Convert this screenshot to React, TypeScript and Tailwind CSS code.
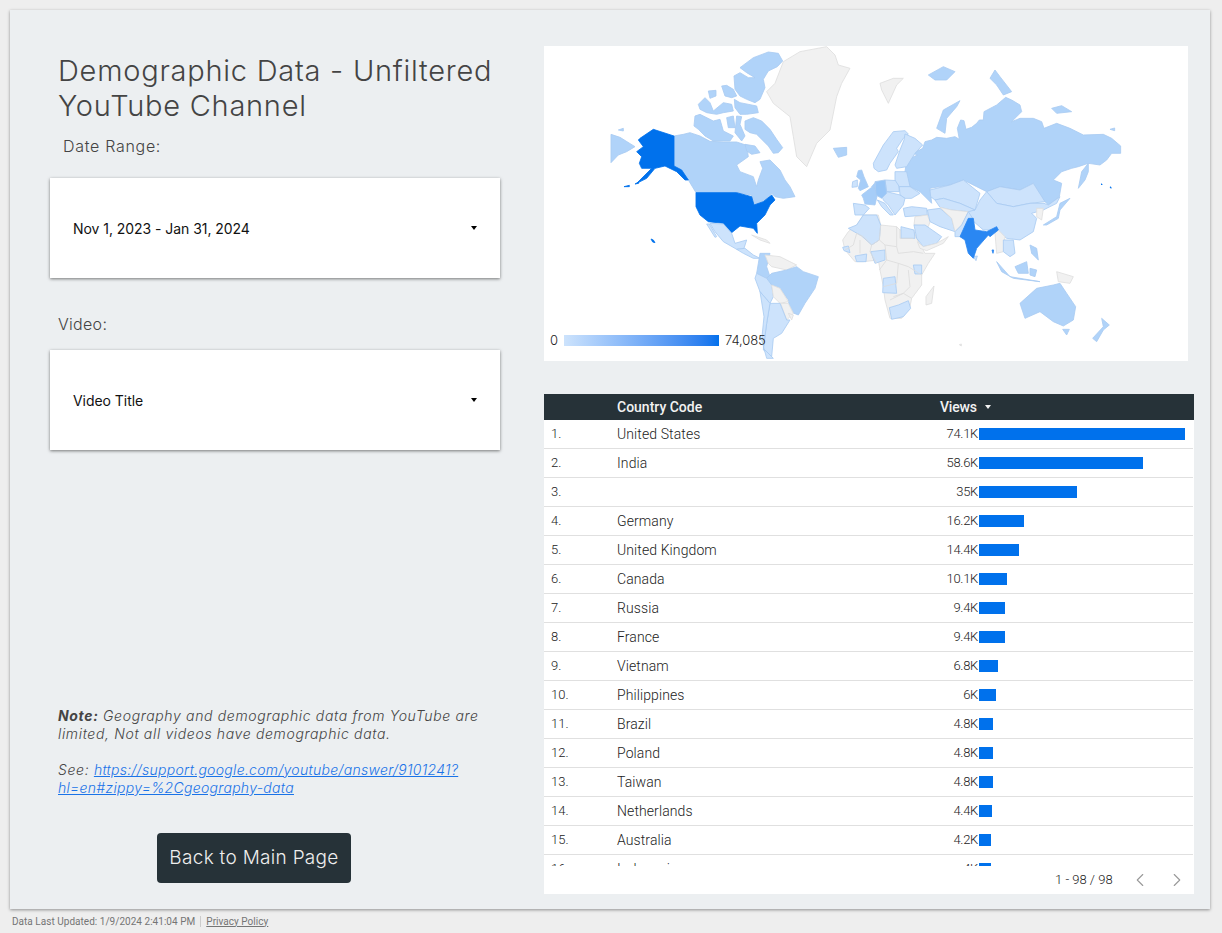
import React from "react";
import { ChevronLeft, ChevronRight } from "lucide-react";

const rows: [string, string, number][] = [
  ["United States", "74.1K", 206],
  ["India", "58.6K", 164],
  ["", "35K", 98],
  ["Germany", "16.2K", 45],
  ["United Kingdom", "14.4K", 40],
  ["Canada", "10.1K", 28],
  ["Russia", "9.4K", 26],
  ["France", "9.4K", 26],
  ["Vietnam", "6.8K", 19],
  ["Philippines", "6K", 17],
  ["Brazil", "4.8K", 14],
  ["Poland", "4.8K", 14],
  ["Taiwan", "4.8K", 14],
  ["Netherlands", "4.4K", 13],
  ["Australia", "4.2K", 12],
  ["Indonesia", "4K", 12],
];

const DARK = "#0071ec";
const IND = "#2a87f2";
const MID = "#b0d3f9";
const LIGHT = "#cde3fc";
const DE = "#99c6f7";
const UK = "#a6cdf8";
const GREY = "#f1f1f1";

type Shape = [string, string];

const west: Shape[] = [
  [GREY, "680,155 705,130 730,65 780,35 860,20 885,45 895,75 930,85 905,130 890,170 870,270 830,310 800,380 770,350 760,290 750,230 700,190"],
  [MID, "880,325 920,322 920,345 895,352"],
  [MID, "402,288 430,283 450,278 480,288 510,304 550,306 590,306 620,316 625,350 590,375 600,395 640,410 650,440 655,420 668,385 660,365 690,360 720,390 735,420 750,440 765,470 730,475 705,470 695,460 670,485 640,495 635,465 590,458 468,458 445,420 425,390 402,378"],
  [MID, "213,283 240,292 285,320 260,335 235,345 213,368"],
  [MID, "235,270 250,265 250,273"],
  [DARK, "300,295 340,268 402,288 402,378 425,390 445,420 435,420 410,395 375,378 345,385 320,415 290,430 335,385 305,385 298,370 305,350 290,335 310,320 295,300"],
  [DARK, "252,440 268,436 268,440"],
  [DARK, "285,432 296,426 296,430"],
  [DARK, "468,458 590,458 635,470 642,495 670,485 695,465 705,480 690,495 675,525 650,550 652,580 640,565 600,558 575,578 550,550 505,545 480,525 468,500"],
  [DARK, "333,597 340,600 345,608 338,606"],
  [LIGHT, "510,550 550,552 575,580 585,610 620,600 612,625 590,628 550,605 525,575"],
  [LIGHT, "500,552 508,552 530,590 525,592"],
  [LIGHT, "590,628 615,625 640,645 660,655 640,655 610,640"],
  [GREY, "635,585 680,600 690,610 660,600"],
  [MID, "660,640 690,640 680,680 690,710 670,715 650,700"],
  [GREY, "675,645 720,650 770,675 740,690 695,680 685,670"],
  [MID, "680,715 695,700 740,690 770,680 790,695 835,710 825,745 795,790 775,825 750,815 745,780 720,745 695,735 680,730"],
  [LIGHT, "650,700 680,715 695,735 700,770 690,790 660,755 645,715"],
  [GREY, "695,735 720,745 745,785 720,790 700,770"],
  [GREY, "722,790 745,790 760,820 740,840"],
  [GREY, "745,820 760,825 755,840"],
  [LIGHT, "690,790 720,790 740,840 750,840 725,880 700,895 695,950 670,930 680,850"],
  [LIGHT, "660,755 690,790 680,850 670,925 700,955 680,955 665,900 672,830"],
];

const arctic: string[] = [
  "150,65 190,35 235,18 265,22 278,45 262,62 235,75 220,100 225,125 210,160 195,170 170,160 150,150 135,130 132,90 150,80 175,95 195,95 170,80",
  "133,160 150,170 200,180 205,200 170,205 150,205 135,185",
  "95,120 110,118 130,130 140,150 125,155 105,150",
  "55,135 78,133 78,150 60,157",
  "25,175 45,155 60,170 70,195 100,170 125,175 130,195 100,200 80,205 50,200 30,190",
  "15,210 30,205 70,225 90,220 100,255 130,270 120,285 70,285 45,270 25,250 12,240",
  "110,215 130,210 135,245 115,245",
  "140,210 155,212 150,235 165,270 155,285 135,260",
  "165,225 190,215 215,225 240,250 260,280 278,305 265,320 250,322 235,300 200,265 180,260 165,250",
  "165,295 195,300 210,320 185,325 170,315",
];

const east: Shape[] = [
  [GREY, "120,130 160,115 190,115 170,135 145,190 125,150"],
  [MID, "195,395 200,360 232,345 220,340 248,325 255,305 275,300 290,292 320,295 345,290 358,298 352,265 362,240 372,242 378,268 395,262 410,250 418,240 430,240 432,215 470,195 497,172 515,180 540,195 545,215 515,245 540,235 580,235 605,245 612,265 650,250 690,265 730,285 790,283 815,295 842,318 842,340 815,340 800,360 780,375 745,370 715,380 695,385 665,395 640,420 665,430 658,470 625,495 610,480 580,430 540,450 480,440 440,455 410,440 370,420 330,435 270,445 275,490 240,455 210,440"],
  [MID, "290,265 310,210 360,182 350,200 320,235 315,280"],
  [MID, "715,445 725,395 745,370 745,395 735,420"],
  [MID, "265,105 310,80 345,95 320,120 285,120"],
  [MID, "450,115 465,90 480,110 515,155 490,165 470,135"],
  [MID, "635,205 665,197 695,215 650,220"],
  [MID, "810,268 824,264 824,272"],
  [LIGHT, "440,455 480,440 540,450 580,430 615,485 570,490 520,500 470,490"],
  [LIGHT, "405,510 420,480 440,455 470,490 520,500 570,490 612,490 625,495 660,470 650,490 610,510 575,520 590,535 580,575 540,600 500,595 470,570 430,570 390,535 370,515"],
  [GREY, "465,580 475,570 495,590 490,635 470,640"],
  [LIGHT, "490,600 520,600 525,640 510,650 490,635"],
  [MID, "610,555 650,530 660,490 690,475 660,510 655,535 620,555"],
  [GREY, "590,505 610,505 605,540 590,530"],
  [MID, "570,615 590,625 595,660 575,640"],
  [MID, "470,665 510,710 570,720 600,725 520,715 485,695"],
  [MID, "525,680 560,665 565,700 535,700"],
  [MID, "570,685 590,690 585,710 570,705"],
  [GREY, "650,695 700,710 690,730 655,725"],
  [MID, "540,790 590,745 640,735 660,730 680,760 707,800 700,840 670,858 640,845 600,815 555,835"],
  [MID, "668,868 688,868 680,885"],
  [MID, "785,835 808,855 790,870 770,905 758,895 790,860"],
  [GREY, "358,914 364,912 364,918"],
  [LIGHT, "400,650 412,648 408,662"],
  [IND, "385,535 400,535 405,570 440,575 470,560 475,570 450,590 445,585 410,625 400,655 385,640 375,600 360,590"],
  [IND, "456,630 461,630 459,640"],
  [DARK, "783,432 786,432 786,435"],
  [DARK, "810,441 813,441 813,445"],
];

const afr: Shape[] = [
  [GREY, "8,330 25,305 50,285 70,255 115,255 122,285 170,290 180,300 220,300 230,325 255,370 285,370 265,400 245,435 245,465 215,505 210,530 185,565 150,565 135,510 130,470 120,420 115,390 70,395 45,395 15,360"],
  [GREY, "258,500 282,468 275,520 258,525"],
  [LIGHT, "25,295 50,285 70,255 110,255 122,285 118,330 95,345 65,318"],
  [LIGHT, "183,290 222,300 225,325 183,325"],
  [LIGHT, "45,378 80,372 78,395 50,395"],
  [LIGHT, "92,365 135,360 135,390 105,400"],
  [LIGHT, "8,352 25,348 30,368 12,362"],
  [LIGHT, "220,405 245,405 245,432 225,432"],
  [LIGHT, "130,445 165,440 170,490 128,488"],
  [LIGHT, "148,533 175,525 205,512 212,535 190,560 155,568"],
  [LIGHT, "100,100 130,45 160,5 195,2 205,12 190,25 170,55 175,65 150,100 140,120 115,125 102,115"],
  [LIGHT, "195,12 225,25 248,45 225,70 200,110 170,115 165,105 180,60 192,30"],
  [UK, "55,122 65,120 72,140 85,170 60,182 55,175 62,150 50,140"],
  [LIGHT, "38,155 52,150 52,170 36,172"],
  [UK, "65,195 95,172 105,172 112,195 105,225 75,222 70,205"],
  [LIGHT, "40,220 75,225 88,235 70,255 45,255"],
  [LIGHT, "135,150 175,152 178,185 140,185"],
  [LIGHT, "165,125 200,125 210,170 178,170 165,150"],
  [LIGHT, "178,170 210,170 240,190 215,205 195,205 180,195"],
  [LIGHT, "125,195 140,185 180,195 195,205 190,225 165,255 145,225 130,210"],
  [LIGHT, "112,210 135,220 160,255 150,255 125,230"],
  [DE, "105,155 135,150 140,190 125,205 108,195"],
  [UK, "95,170 108,155 105,175"],
  [LIGHT, "190,235 215,230 260,235 262,255 195,260"],
  [GREY, "225,260 262,255 270,275 265,290 222,285"],
  [LIGHT, "222,285 255,285 305,320 290,340 250,350 230,325"],
  [GREY, "232,335 250,350 290,340 325,320 310,340 260,362 240,355"],
  [LIGHT, "262,240 300,235 335,265 345,305 300,290 270,275"],
  [LIGHT, "270,180 330,165 370,150 420,190 405,240 360,220 310,205 285,210 272,200"],
  [LIGHT, "285,210 310,205 360,220 405,240 385,245 335,240 300,232"],
  [GREY, "300,232 335,240 385,245 365,285 345,305 335,265"],
  [LIGHT, "345,305 365,285 385,245 398,265 365,320 345,320"],
];

const afrLines = [
  "122,285 118,330 95,345 70,320 50,310",
  "170,290 170,350 135,345 118,330",
  "180,300 180,325 220,325",
  "170,350 175,370 220,365 250,370",
  "95,345 90,365 110,400",
  "135,345 140,390 175,400 205,410 245,435",
  "140,390 118,420",
  "175,400 170,460 130,470",
  "205,420 210,470 190,490 160,500",
  "215,505 190,490",
  "50,310 40,345 15,360",
  "60,330 60,370",
  "150,510 190,490",
];

function strokeFor(fill: string) {
  if (fill === GREY) return "#dfdfdf";
  if (fill === DARK || fill === IND) return fill;
  return "#a9cbf2";
}

function Polys({ items }: { items: Shape[] }) {
  return (
    <>
      {items.map(([f, p], i) => (
        <polygon key={i} points={p} fill={f} stroke={strokeFor(f)} strokeWidth="2.5" strokeLinejoin="round" />
      ))}
    </>
  );
}

function WorldMap() {
  return (
    <svg viewBox="544 46 644 315" className="block w-[644px] h-[315px]">
      <g transform="translate(540 40) scale(0.33333)">
        <Polys items={west} />
      </g>
      <g transform="translate(690 46) scale(0.33333)">
        <Polys items={arctic.map((p): Shape => [MID, p])} />
      </g>
      <g transform="translate(840 40) scale(0.33333)">
        <Polys items={east.slice(0, 10)} />
      </g>
      <g transform="translate(840 130) scale(0.33333)">
        <Polys items={afr} />
        {afrLines.map((p, i) => (
          <polyline key={i} points={p} fill="none" stroke="#dcdcdc" strokeWidth="2.5" />
        ))}
      </g>
      <g transform="translate(840 40) scale(0.33333)">
        <Polys items={east.slice(10)} />
      </g>
    </svg>
  );
}

function Dropdown({ label }: { label: string }) {
  return (
    <div className="w-[450px] h-[100px] bg-white shadow-[0_1px_3px_rgba(0,0,0,0.5)] flex items-center justify-between pl-[23px] pr-[23px]">
      <span className="font-['Inter'] text-[14px] text-[#111] tracking-[-0.05px]">{label}</span>
      <span className="w-0 h-0 border-x-[3.5px] border-x-transparent border-t-[4px] border-t-black" />
    </div>
  );
}

export default function App() {
  return (
    <div className="w-[1222px] h-[933px] bg-[#eeeeee] overflow-hidden flex flex-col">
      <div className="mt-[10px] ml-[10px] w-[1200px] h-[899px] bg-[#eceff1] shadow-[0_1px_3px_rgba(0,0,0,0.4)] flex">
        <div className="ml-[40px] w-[450px] flex flex-col font-['Inter']">
          <h1 className="mt-[43px] ml-[8px] text-[29px] leading-[35px] font-light text-[#444] tracking-[0.75px]">
            Demographic Data - Unfiltered
            <br />
            YouTube Channel
          </h1>
          <div className="mt-[11px] ml-[13px] text-[16px] leading-[24px] font-light text-[#444] tracking-[0.7px]">Date Range:</div>
          <div className="mt-[20px]">
            <Dropdown label="Nov 1, 2023 - Jan 31, 2024" />
          </div>
          <div className="mt-[34px] ml-[8px] text-[16px] leading-[24px] font-light text-[#444] tracking-[0.3px]">Video:</div>
          <div className="mt-[14px]">
            <Dropdown label="Video Title" />
          </div>
          <div className="mt-auto ml-[8px] w-[440px] text-[14px] leading-[18px] italic font-light text-[#444] tracking-[0.65px]">
            <p>
              <b className="font-bold">Note:</b> Geography and demographic data from YouTube are limited, Not all videos have demographic data.
            </p>
            <p className="mt-[18px]">
              See:{" "}
              <a className="text-[#1a73e8] underline tracking-[0.3px]" href="#">
                https://support.google.com/youtube/answer/9101241?
                <br />
                hl=en#zippy=%2Cgeography-data
              </a>
            </p>
          </div>
          <div className="mt-[36px] mb-[26px] ml-[107px] w-[194px] h-[50px] bg-[#263238] rounded-[4px] flex items-center justify-center text-[19px] font-light text-[#eeeeee] tracking-[0.3px]">
            Back to Main Page
          </div>
        </div>
        <div className="ml-[44px] w-[650px] pt-[36px] flex flex-col">
          <div className="relative w-[644px] h-[315px] bg-white">
            <WorldMap />
            <div className="absolute left-[6px] bottom-[11px] flex items-center font-['Inter'] text-[13px] font-light text-[#222]">
              <span className="w-[14px]">0</span>
              <span className="w-[155px] h-[11px] bg-gradient-to-r from-[#cde3fc] to-[#0071ec]" />
              <span className="ml-[6px] tracking-[-0.1px]">74,085</span>
            </div>
          </div>
          <div className="mt-[33px] w-[650px] h-[500px] font-['Roboto'] text-[13px] flex flex-col bg-white">
            <div className="h-[26px] bg-[#263238] text-[#f2f2f2] font-medium text-[14px] flex items-center shrink-0">
              <span className="ml-[73px] w-[323px]">Country Code</span>
              <span className="w-[39px] tracking-[-0.2px]">Views</span>
              <span className="ml-[6px] w-0 h-0 border-x-[3.5px] border-x-transparent border-t-[4px] border-t-[#f2f2f2]" />
            </div>
            <div className="h-[446px] overflow-hidden pr-[1px] shrink-0">
              {rows.map(([name, val, w], i) => (
                <div key={i} className="h-[29px] border-b border-[#e0e0e0] flex items-center text-[#222] font-light">
                  <span className="ml-[7px] w-[66px]">{i + 1}.</span>
                  <span className="w-[250px] text-[14px] tracking-[0.1px]">{name}</span>
                  <span className="w-[111px] text-right tracking-[-0.3px]">{val}</span>
                  <span className="ml-[1px] h-[12px] bg-[#0071ec]" style={{ width: w }} />
                </div>
              ))}
            </div>
            <div className="h-[28px] flex items-center text-[#222] font-light shrink-0">
              <span className="ml-[511px]">1 - 98 / 98</span>
              <ChevronLeft className="ml-[16px] w-[22px] h-[22px] text-[#999]" strokeWidth={1.2} />
              <ChevronRight className="ml-[15px] w-[22px] h-[22px] text-[#999]" strokeWidth={1.2} />
            </div>
          </div>
        </div>
      </div>
      <div className="ml-[12px] mt-[6px] h-[12px] flex items-center font-['Roboto'] text-[10px] text-[#757575] tracking-[0.03px]">
        <span>Data Last Updated: 1/9/2024 2:41:04 PM</span>
        <span className="mx-[5px] w-px h-[11px] bg-[#ccc]" />
        <span className="underline">Privacy Policy</span>
      </div>
    </div>
  );
}
